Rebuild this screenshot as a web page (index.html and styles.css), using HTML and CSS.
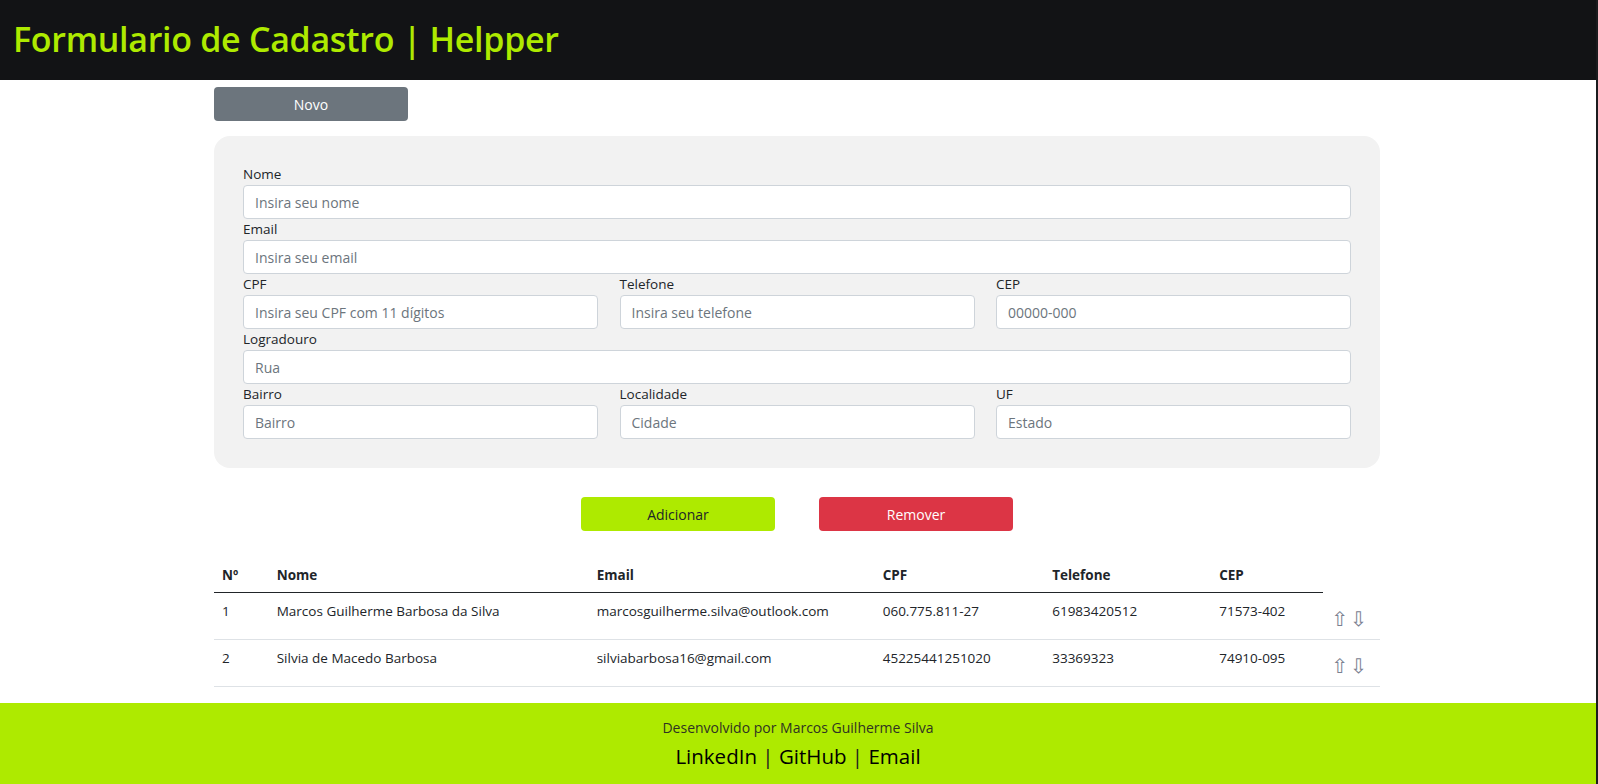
FILE: index.html
```html
<!DOCTYPE html>
<html lang="pt-BR">
<head>
<meta charset="utf-8">
<title>Formulario de Cadastro | Helpper</title>
<link rel="stylesheet" href="styles.css">
</head>
<body>
<header class="topbar">
  <h1 class="title">Formulario de Cadastro | Helpper</h1>
</header>
<main class="page">
  <div class="toolbar">
    <button class="btn btn-novo" type="button">Novo</button>
  </div>
  <form class="card">
    <div class="field">
      <label class="label">Nome</label>
      <input class="input" type="text" placeholder="Insira seu nome">
    </div>
    <div class="field">
      <label class="label">Email</label>
      <input class="input" type="text" placeholder="Insira seu email">
    </div>
    <div class="grid3">
      <div class="field">
        <label class="label">CPF</label>
        <input class="input" type="text" placeholder="Insira seu CPF com 11 dígitos">
      </div>
      <div class="field">
        <label class="label">Telefone</label>
        <input class="input" type="text" placeholder="Insira seu telefone">
      </div>
      <div class="field">
        <label class="label">CEP</label>
        <input class="input" type="text" placeholder="00000-000">
      </div>
    </div>
    <div class="field">
      <label class="label">Logradouro</label>
      <input class="input" type="text" placeholder="Rua">
    </div>
    <div class="grid3">
      <div class="field">
        <label class="label">Bairro</label>
        <input class="input" type="text" placeholder="Bairro">
      </div>
      <div class="field">
        <label class="label">Localidade</label>
        <input class="input" type="text" placeholder="Cidade">
      </div>
      <div class="field">
        <label class="label">UF</label>
        <input class="input" type="text" placeholder="Estado">
      </div>
    </div>
  </form>
  <div class="actions">
    <button class="btn btn-add" type="button">Adicionar</button>
    <button class="btn btn-remove" type="button">Remover</button>
  </div>
  <table class="table">
    <colgroup>
      <col class="col-n"><col class="col-nome"><col class="col-email"><col class="col-cpf"><col class="col-tel"><col class="col-cep"><col class="col-move">
    </colgroup>
    <thead>
      <tr><th>Nº</th><th>Nome</th><th>Email</th><th>CPF</th><th>Telefone</th><th>CEP</th></tr>
    </thead>
    <tbody>
      <tr>
        <td>1</td><td>Marcos Guilherme Barbosa da Silva</td><td>marcosguilherme.silva@outlook.com</td><td>060.775.811-27</td><td>61983420512</td><td>71573-402</td>
        <td class="move"><span class="arrow">⇧</span><span class="arrow">⇩</span></td>
      </tr>
      <tr>
        <td>2</td><td>Silvia de Macedo Barbosa</td><td>silviabarbosa16@gmail.com</td><td>45225441251020</td><td>33369323</td><td>74910-095</td>
        <td class="move"><span class="arrow">⇧</span><span class="arrow">⇩</span></td>
      </tr>
    </tbody>
  </table>
</main>
<footer class="footer">
  <p class="credit">Desenvolvido por Marcos Guilherme Silva</p>
  <p class="links"><a href="#">LinkedIn</a> | <a href="#">GitHub</a> | <a href="#">Email</a></p>
</footer>
</body>
</html>
```

FILE: styles.css
```css
html {
  background: #1b1c1e;
}
body {
  margin: 0 2px 0 0;
  font-family: "Open Sans", "Noto Sans", sans-serif;
  color: #212529;
  background: #fff;
}
.topbar {
  height: 80px;
  background: #121315;
  display: flex;
  align-items: center;
  padding-left: 13px;
}
.title {
  margin: 0 0 2px;
  font-size: 34px;
  font-weight: 600;
  color: #aeea00;
  line-height: 1.2;
  letter-spacing: -0.3px;
}
.page {
  width: 1166px;
  margin: 0 0 0 calc(50% - 584px);
}
.toolbar {
  padding-top: 7px;
}
.btn {
  width: 194px;
  height: 34px;
  border: none;
  border-radius: 4px;
  font-family: inherit;
  font-size: 14px;
  cursor: pointer;
  padding: 0;
}
.btn-novo {
  background: #6c757d;
  color: #fff;
}
.card {
  margin-top: 15px;
  background: #f2f2f2;
  border-radius: 16px;
  padding: 28px 29px 29px;
}
.label {
  display: block;
  font-size: 13.5px;
  line-height: 21px;
  color: #212529;
}
.input {
  display: block;
  width: 100%;
  box-sizing: border-box;
  height: 34px;
  border: 1px solid #ced4da;
  border-radius: 4px;
  padding: 0 11px;
  font-family: inherit;
  font-size: 14px;
  background: #fff;
  color: #212529;
}
.input::placeholder {
  color: #6c757d;
}
.grid3 {
  display: grid;
  grid-template-columns: 1fr 1fr 1fr;
  column-gap: 21.5px;
}
.actions {
  display: flex;
  justify-content: center;
  gap: 44px;
  margin-top: 29px;
}
.btn-add {
  background: #aeea00;
  color: #212529;
}
.btn-remove {
  background: #dc3545;
  color: #fff;
}
.table {
  width: 100%;
  margin-top: 24px;
  margin-bottom: 16px;
  border-collapse: collapse;
  table-layout: fixed;
  font-size: 13.5px;
}
.col-n { width: 54.7px; }
.col-nome { width: 320px; }
.col-email { width: 286px; }
.col-cpf { width: 169.5px; }
.col-tel { width: 167px; }
.col-cep { width: 112px; }
.col-move { width: 57px; }
.table th {
  text-align: left;
  font-weight: 700;
  padding: 10px 8px 6px;
  line-height: 21px;
  border-bottom: 1px solid #212529;
}
.table td {
  padding: 8px;
  line-height: 21px;
  vertical-align: top;
  border-bottom: 1px solid #dee2e6;
  white-space: nowrap;
}
.table td.move {
  padding: 8px 0 8px 8px;
}
.arrow {
  display: inline-block;
  vertical-align: top;
  height: 30px;
  line-height: 36px;
  font-family: "DejaVu Sans", sans-serif;
  font-size: 20px;
  color: #7a8090;
  margin-right: 2px;
}
.footer {
  background: #aeea00;
  text-align: center;
  padding: 15px 0 14px;
}
.credit {
  margin: 0;
  font-size: 14px;
  line-height: 20px;
  color: #2f3322;
}
.links {
  margin: 0;
  font-size: 20.5px;
  line-height: 36px;
  color: #222;
}
.links a {
  color: #000;
  text-decoration: none;
}
```
